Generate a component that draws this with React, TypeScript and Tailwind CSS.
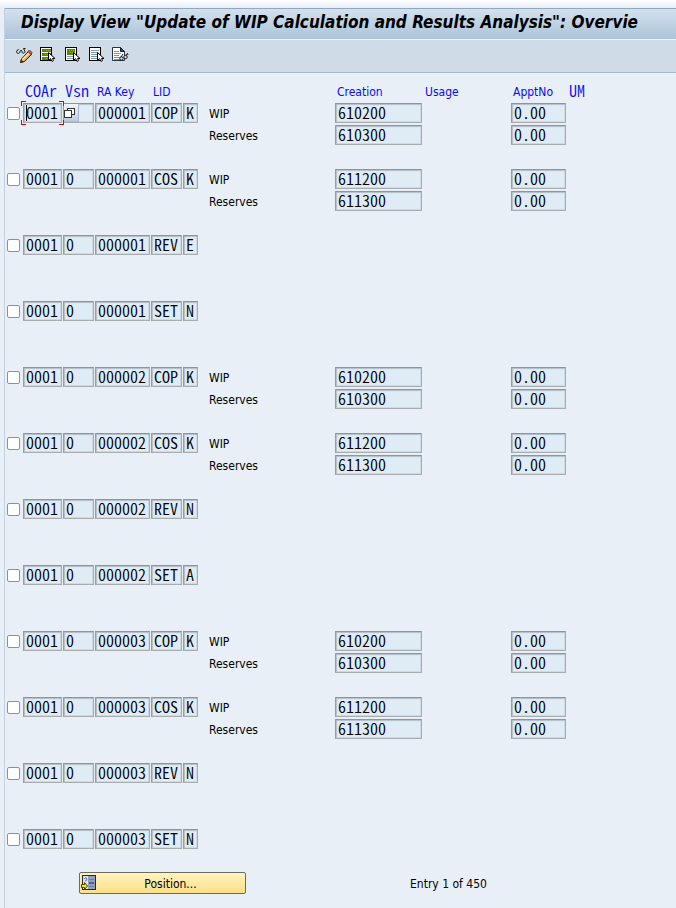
import React from "react";

type Line = { label: string; creation: string; apptNo: string };
type Entry = { coAr: string; vsn: string; raKey: string; lid: string; kind: string; lines: Line[] };

const UI = "font-['DejaVu_Sans_Condensed','DejaVu_Sans',sans-serif]";
const MONO = "font-['Noto_Sans_CJK_JP',monospace] font-[350] [font-feature-settings:'hwid']";

const copLines: Line[] = [
  { label: "WIP", creation: "610200", apptNo: "0.00" },
  { label: "Reserves", creation: "610300", apptNo: "0.00" },
];
const cosLines: Line[] = [
  { label: "WIP", creation: "611200", apptNo: "0.00" },
  { label: "Reserves", creation: "611300", apptNo: "0.00" },
];

function group(raKey: string, revKind: string, setKind: string): Entry[] {
  const base = { coAr: "0001", vsn: "0", raKey };
  return [
    { ...base, lid: "COP", kind: "K", lines: copLines },
    { ...base, lid: "COS", kind: "K", lines: cosLines },
    { ...base, lid: "REV", kind: revKind, lines: [] },
    { ...base, lid: "SET", kind: setKind, lines: [] },
  ];
}

const entries: Entry[] = [
  ...group("000001", "E", "N"),
  ...group("000002", "N", "A"),
  ...group("000003", "N", "N"),
];

function Field({ value, label, width }: { value: string; label: string; width: string }) {
  return (
    <input
      readOnly
      aria-label={label}
      value={value}
      className={`${MONO} ${width} block h-5 border border-t-[#8f9499] border-l-[#999da1] border-r-[#a9acaf] border-b-[#a9acaf] bg-[#dfebf5] p-0 pb-0.5 pl-0.5 text-base leading-4 text-black shadow-[inset_1px_1px_1px_#b4bec8,inset_-1px_-1px_0_#d0dae3] outline-none`}
    />
  );
}

function Arrow({ x, y }: { x: number; y: number }) {
  return (
    <path
      transform={`translate(${x} ${y})`}
      d="M.5 .5V8.5L2.5 6.5L4 9.500L5.500 8.500L4.500 6.500H7Z"
      fill="#fff"
      stroke="#000"
      strokeWidth="1"
    />
  );
}

function ToggleIcon() {
  return (
    <svg viewBox="0 0 17 17" className="size-[17px] shrink-0" fill="none">
      <path d="M.5 4.500L2.500 2M.5 4.500C.5 7 4 7 4 4.500C4 3 6 3 6 4.500C6 7 9 6.500 9 4.500L7.500 1.500L9.500 1.500" stroke="#111" />
      <path d="M5.500 12L12.500 4.500L15.500 7.500L8.500 14.500L4.500 15.500Z" fill="#f7a83c" stroke="#1c160c" />
      <path d="M6.500 12.500L13 6" stroke="#fff3b8" strokeWidth="1.500" />
      <path d="M12 4.500L13.500 3L16 5.500L15 7.500Z" fill="#dd7561" stroke="#533" />
      <path d="M5 13L7.500 15L4 16Z" fill="#3b2a1e" />
    </svg>
  );
}

function SelectAllIcon() {
  return (
    <svg viewBox="0 0 16 16" className="size-4 shrink-0">
      <rect x=".5" y=".5" width="11" height="13" fill="#fff" stroke="#000" />
      <path d="M2 2H11V5H2ZM2 6H11V9H2ZM2 10H11V13H2Z" fill="#5d8500" />
      <path d="M6 3.500H11M5 7.500H11M6 11.500H8" stroke="#93b52d" strokeDasharray="1 1" />
      <Arrow x={8} y={5} />
    </svg>
  );
}

function SelectBlockIcon() {
  return (
    <svg viewBox="0 0 16 16" className="size-4 shrink-0">
      <rect x="1.500" y=".5" width="11" height="13" fill="#fff" stroke="#000" />
      <path d="M3 2H11V8H3Z" fill="#5d8500" />
      <path d="M5 3.500H11M6 5.500H11" stroke="#93b52d" strokeDasharray="1 1" />
      <path d="M3 9.500H10M3 11.500H10" stroke="#8a9db2" />
      <Arrow x={9} y={5} />
    </svg>
  );
}

function DeselectIcon() {
  return (
    <svg viewBox="0 0 16 16" className="size-4 shrink-0">
      <rect x="1.500" y=".5" width="11" height="13" fill="#fff" stroke="#000" />
      <path d="M3 3.500H11M3 5.500H10M3 7.500H9M3 9.500H9M3 11.500H9" stroke="#8096ac" />
      <Arrow x={9} y={5} />
    </svg>
  );
}

function DetailIcon() {
  return (
    <svg viewBox="0 0 17 16" className="h-4 w-[17px] shrink-0" fill="none">
      <path d="M.5 .5H8.500L12.500 4.500V13.500H.5Z" fill="#fff" stroke="#26364a" />
      <path d="M8.500 .5V4.500H12.500Z" fill="#456" stroke="#111c2a" />
      <path d="M2 4.500H7M2 6.500H9M2 8.500H7M2 10.500H8M2 12.500H9" stroke="#7f97b0" />
      <circle cx="9.500" cy="11.500" r="1.700" fill="#dce8f2" stroke="#111" />
      <circle cx="13.500" cy="10" r="1.700" fill="#dce8f2" stroke="#111" />
      <path d="M9 10L11 7M14 8.500L15.500 6.500L16 8" stroke="#111" />
    </svg>
  );
}

function PositionIcon() {
  return (
    <svg viewBox="0 0 15 16" className="h-4 w-[15px] shrink-0">
      <rect x="1.500" y=".5" width="13" height="14" fill="#8fa0c4" stroke="#1d2740" />
      <path d="M2 1H7V14H2Z" fill="#dce6f2" />
      <path d="M3 4L5 2.500L6 5M4 6L6 5" stroke="#69788f" fill="none" />
      <path d="M8 4.500H13M8 11.500H13" stroke="#6c7ca5" />
      <path d="M8 8H13" stroke="#1d2740" />
      <path d="M.5 9.500H3.500V7.500L6.500 11L3.500 14.500V12.500H.5Z" fill="#ffe600" stroke="#4a3c00" />
    </svg>
  );
}

const tools = [
  { name: "Display -> Change", icon: <ToggleIcon /> },
  { name: "Select all", icon: <SelectAllIcon /> },
  { name: "Select block", icon: <SelectBlockIcon /> },
  { name: "Deselect all", icon: <DeselectIcon /> },
  { name: "Details", icon: <DetailIcon /> },
];

function Focus() {
  return (
    <svg
      aria-hidden="true"
      viewBox="0 0 43 24"
      className="pointer-events-none absolute -top-0.5 -left-0.5 z-10 h-6 w-[43px]"
      fill="none"
      shapeRendering="crispEdges"
    >
      <path
        d="M5 .5H.5V5M38 .5H42.500V5M5 23.500H.5V19M38 23.500H42.500V19"
        stroke="#e60000"
      />
      <path d="M5.500 4V20" stroke="#000" />
    </svg>
  );
}

function ValueHelp() {
  return (
    <button
      type="button"
      aria-label="Value help"
      className="absolute top-px left-px flex h-[18px] w-[15px] items-center justify-start border-r border-b border-[#a9b8cf] bg-linear-to-b from-[#f4f7fb] to-[#bccbe3]"
    >
      <svg viewBox="0 0 11 11" className="size-[11px]" shapeRendering="crispEdges">
        <path d="M3.500 1.500H10.500V7.500H3.500Z" fill="#fff" stroke="#333" />
        <path d="M.5 3.500H7.500V10.500H.5Z" fill="#fff" stroke="#333" />
      </svg>
    </button>
  );
}

function LineCells({ line }: { line?: Line }) {
  if (!line) return <td colSpan={5} />;
  return (
    <>
      <td><span className="block pt-0.5">{line.label}</span></td>
      <td><Field label={`${line.label} creation`} value={line.creation} width="w-[87px]" /></td>
      <td />
      <td><Field label={`${line.label} apportionment number`} value={line.apptNo} width="w-[55px]" /></td>
      <td />
    </>
  );
}

function EntryRows({ entry, index }: { entry: Entry; index: number }) {
  const first = index === 0;
  const last = index === entries.length - 1;
  const [a, b] = entry.lines;
  return (
    <tbody>
      <tr className="h-[22px]">
        <td>
          <input
            type="checkbox"
            aria-label={`Select entry ${index + 1}`}
            className="block size-[13px] appearance-none rounded-xs border border-[#8c9196] bg-white"
          />
        </td>
        <td>
          <div className="relative">
            <Field label="COAr" value={entry.coAr} width="w-[39px]" />
            {first && <Focus />}
          </div>
        </td>
        <td>
          <div className="relative">
            <Field label="Vsn" value={first ? "" : entry.vsn} width="w-[31px]" />
            {first && <ValueHelp />}
          </div>
        </td>
        <td><Field label="RA Key" value={entry.raKey} width="w-[55px]" /></td>
        <td><Field label="LID" value={entry.lid} width="w-[31px]" /></td>
        <td><Field label="Category" value={entry.kind} width="w-[15px]" /></td>
        <LineCells line={a} />
      </tr>
      <tr className="h-[22px]">
        <td colSpan={6} />
        <LineCells line={b} />
      </tr>
      {!last && (
        <tr className="h-[22px]">
          <td colSpan={11} />
        </tr>
      )}
    </tbody>
  );
}

export default function App() {
  return (
    <div className={`${UI} flex min-h-screen flex-col overflow-hidden bg-[#e8eff7] text-xs leading-4 text-black`}>
      <div className="h-2 bg-linear-to-b from-white to-[#e6edf5]" />
      <div className="ml-1 grow border-l border-[#c3d0dd]">
        <header>
          <h1 className="flex h-8 items-center overflow-hidden border-t border-b border-t-[#8fa8c0] border-b-[#eef4fa] bg-linear-to-b from-[#d3e1ed] to-[#abc3da] pb-1 pl-4 text-[17px] font-bold whitespace-nowrap italic">
            Display View "Update of WIP Calculation and Results Analysis": Overvie
          </h1>
          <div role="toolbar" aria-label="Application toolbar" className="flex h-[33px] items-center gap-2 border-b border-[#a3b6ca] bg-[#cfdce7] pb-0.5 pl-[11px]">
            {tools.map((t) => (
              <button key={t.name} type="button" aria-label={t.name} className="flex w-4 justify-start">
                {t.icon}
              </button>
            ))}
          </div>
        </header>
        <main className="pt-[7px] pl-0.5">
          <table className="w-full table-fixed border-collapse text-left [&_td]:p-0 [&_th]:p-0 [&_th]:font-normal">
            <colgroup>
              <col className="w-4" />
              <col className="w-10" />
              <col className="w-8" />
              <col className="w-14" />
              <col className="w-8" />
              <col className="w-[26px]" />
              <col className="w-[126px]" />
              <col className="w-[90px]" />
              <col className="w-[86px]" />
              <col className="w-[58px]" />
              <col />
            </colgroup>
            <thead>
              <tr className="h-[22px] whitespace-nowrap text-[#0a0af5]">
                <td />
                <th><span className={`${MONO} block pb-0.5 pl-0.5 text-base leading-4`}>COAr</span></th>
                <th><span className={`${MONO} block pb-0.5 pl-0.5 text-base leading-4`}>Vsn</span></th>
                <th><span className="block pt-0.5 pl-0.5">RA Key</span></th>
                <th><span className="block pt-0.5 pl-0.5">LID</span></th>
                <td />
                <td />
                <th><span className="block pt-0.5 pl-0.5">Creation</span></th>
                <th><span className="block pt-0.5">Usage</span></th>
                <th><span className="block pt-0.5 pl-0.5">ApptNo</span></th>
                <th><span className={`${MONO} block pb-0.5 text-base leading-4`}>UM</span></th>
              </tr>
            </thead>
            {entries.map((e, i) => (
              <EntryRows key={i} entry={e} index={i} />
            ))}
          </table>
          <footer className="flex items-center pl-[72px]">
            <button
              type="button"
              className="flex h-[22px] w-[167px] items-center rounded-xs border border-[#6f6a60] bg-linear-to-b from-[#fff3bd] to-[#fbe087] pl-px"
            >
              <PositionIcon />
              <span className="flex-1 pt-0.5 text-center">Position...</span>
            </button>
            <p className="pt-0.5 pl-[164px]">Entry 1 of 450</p>
          </footer>
        </main>
      </div>
    </div>
  );
}
